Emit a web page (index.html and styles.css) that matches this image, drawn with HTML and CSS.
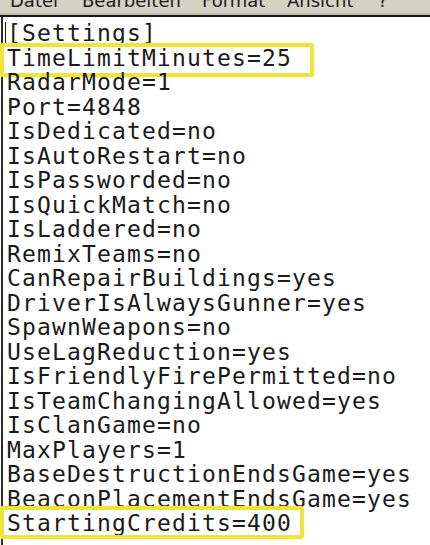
FILE: index.html
```html
<!DOCTYPE html>
<html>
<head>
<meta charset="utf-8">
<link rel="stylesheet" href="styles.css">
</head>
<body>
<div class="menubar">
  <div class="menu-items">
    <span class="mi mi-datei">Datei</span>
    <span class="mi mi-bearb">Bearbeiten</span>
    <span class="mi mi-format">Format</span>
    <span class="mi mi-ansicht">Ansicht</span>
    <span class="mi">?</span>
  </div>
</div>
<div class="editor">
  <div class="line first"><span class="caret"></span>[Settings]</div>
  <div class="line mark mark-a">TimeLimitMinutes=25</div>
  <div class="line">RadarMode=1</div>
  <div class="line">Port=4848</div>
  <div class="line">IsDedicated=no</div>
  <div class="line">IsAutoRestart=no</div>
  <div class="line">IsPassworded=no</div>
  <div class="line">IsQuickMatch=no</div>
  <div class="line">IsLaddered=no</div>
  <div class="line">RemixTeams=no</div>
  <div class="line">CanRepairBuildings=yes</div>
  <div class="line">DriverIsAlwaysGunner=yes</div>
  <div class="line">SpawnWeapons=no</div>
  <div class="line">UseLagReduction=yes</div>
  <div class="line">IsFriendlyFirePermitted=no</div>
  <div class="line">IsTeamChangingAllowed=yes</div>
  <div class="line">IsClanGame=no</div>
  <div class="line">MaxPlayers=1</div>
  <div class="line">BaseDestructionEndsGame=yes</div>
  <div class="line">BeaconPlacementEndsGame=yes</div>
  <div class="line mark mark-b">StartingCredits=400</div>
</div>
</body>
</html>
```

FILE: styles.css
```css
html, body {
  margin: 0;
  padding: 0;
  background: #ffffff;
  width: 430px;
  height: 545px;
  overflow: hidden;
}

.menubar {
  height: 15px;
  background: #d5d2c4;
  overflow: hidden;
  border-bottom: 2px solid #1a1a1a;
  box-shadow: inset 0 -2px 0 #c2bfb0;
}

.menu-items {
  display: flex;
  margin-top: -8px;
  font-family: "DejaVu Sans", sans-serif;
  font-size: 18px;
  line-height: 18px;
  color: #1c1c1c;
  white-space: nowrap;
}

.mi { display: inline-block; }
.mi-datei { margin-left: 10px; width: 72px; }
.mi-bearb { width: 120px; }
.mi-format { width: 85px; }
.mi-ansicht { width: 91px; }

.editor {
  border-left: 2px solid #2a2a2a;
  margin-left: 1px;
  padding: 4px 0 0 4px;
  font-family: "DejaVu Sans Mono", "Liberation Mono", monospace;
  font-size: 23px;
  letter-spacing: 1.15px;
  line-height: 24.5px;
  color: #1a1a1a;
  min-height: 540px;
}

.line {
  position: relative;
  height: 24.5px;
  white-space: pre;
}

.caret {
  position: absolute;
  left: -2px;
  top: 1px;
  width: 1px;
  height: 22px;
  background: #111;
}

.mark::after {
  content: "";
  position: absolute;
  left: -7px;
  border: 4px solid #efe43a;
  border-radius: 3px;
  box-shadow: 0 0 2px rgba(240, 228, 60, 0.7);
}

.mark-a::after {
  top: -3px;
  width: 306px;
  height: 26px;
}

.mark-b::after {
  top: -5px;
  width: 296px;
  height: 25px;
}
```
